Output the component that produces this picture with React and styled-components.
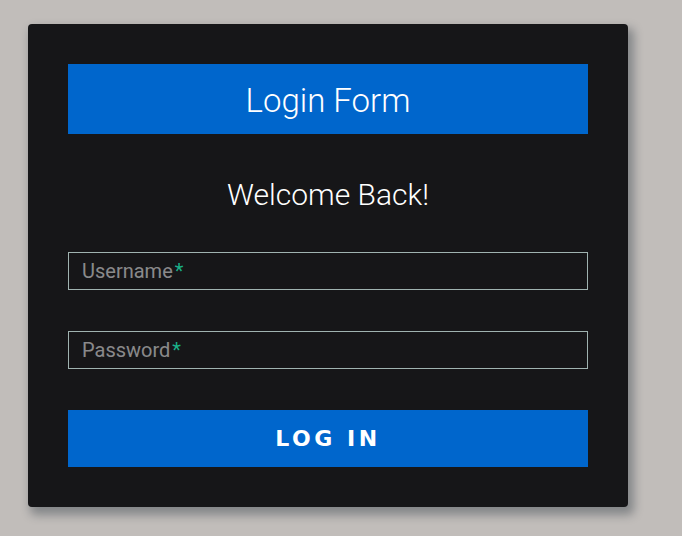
import React from "react";
import styled, { createGlobalStyle } from "styled-components";

const GlobalStyle = createGlobalStyle`
  * {
    box-sizing: border-box;
  }
  body {
    margin: 0;
    background: #c1bdba;
    font-family: Roboto, "Open Sans", sans-serif;
  }
`;

const Page = styled.div`
  padding: 24px 0 0 28px;
  min-height: 536px;
`;

const Card = styled.form`
  width: 600px;
  padding: 40px;
  background: #161618;
  border-radius: 4px;
  box-shadow: 4px 6px 10px 2px rgba(19, 35, 47, 0.35);
  display: flex;
  flex-direction: column;
`;

const Header = styled.h1`
  margin: 0;
  height: 70px;
  padding-top: 3px;
  display: flex;
  align-items: center;
  justify-content: center;
  background: #0066cc;
  color: #ffffff;
  font-family: Roboto, sans-serif;
  font-weight: 300;
  font-size: 33px;
`;

const Welcome = styled.h2`
  margin: 42px 0 38px;
  line-height: 38px;
  text-align: center;
  color: #ffffff;
  font-family: Roboto, sans-serif;
  font-weight: 300;
  font-size: 30px;
`;

const Field = styled.div`
  position: relative;
  margin-bottom: 41px;
`;

const Label = styled.label`
  position: absolute;
  left: 14px;
  top: 50%;
  transform: translateY(-50%);
  color: rgba(255, 255, 255, 0.5);
  font-family: Roboto, sans-serif;
  font-weight: 400;
  font-size: 20px;
  pointer-events: none;
`;

const Req = styled.span`
  margin-left: 2px;
  color: #1ab188;
`;

const Input = styled.input`
  display: block;
  width: 100%;
  height: 38px;
  padding: 0 13px;
  background: transparent;
  border: 1px solid #a0b3b0;
  border-radius: 0;
  color: #ffffff;
  font-family: Roboto, sans-serif;
  font-size: 20px;
  outline: none;
`;

const Button = styled.button`
  height: 57px;
  border: 0;
  border-radius: 0;
  background: #0066cc;
  color: #ffffff;
  font-family: "DejaVu Sans", sans-serif;
  font-weight: 700;
  font-size: 22px;
  letter-spacing: 0.16em;
  text-transform: uppercase;
  cursor: pointer;
`;

const InputField = ({ label, type }) => (
  <Field>
    <Label>
      {label}
      <Req>*</Req>
    </Label>
    <Input type={type} required autoComplete="off" />
  </Field>
);

export default function App() {
  return (
    <>
      <GlobalStyle />
      <Page>
        <Card onSubmit={(e) => e.preventDefault()}>
          <Header>Login Form</Header>
          <Welcome>Welcome Back!</Welcome>
          <InputField label="Username" type="text" />
          <InputField label="Password" type="password" />
          <Button type="submit">Log In</Button>
        </Card>
      </Page>
    </>
  );
}
